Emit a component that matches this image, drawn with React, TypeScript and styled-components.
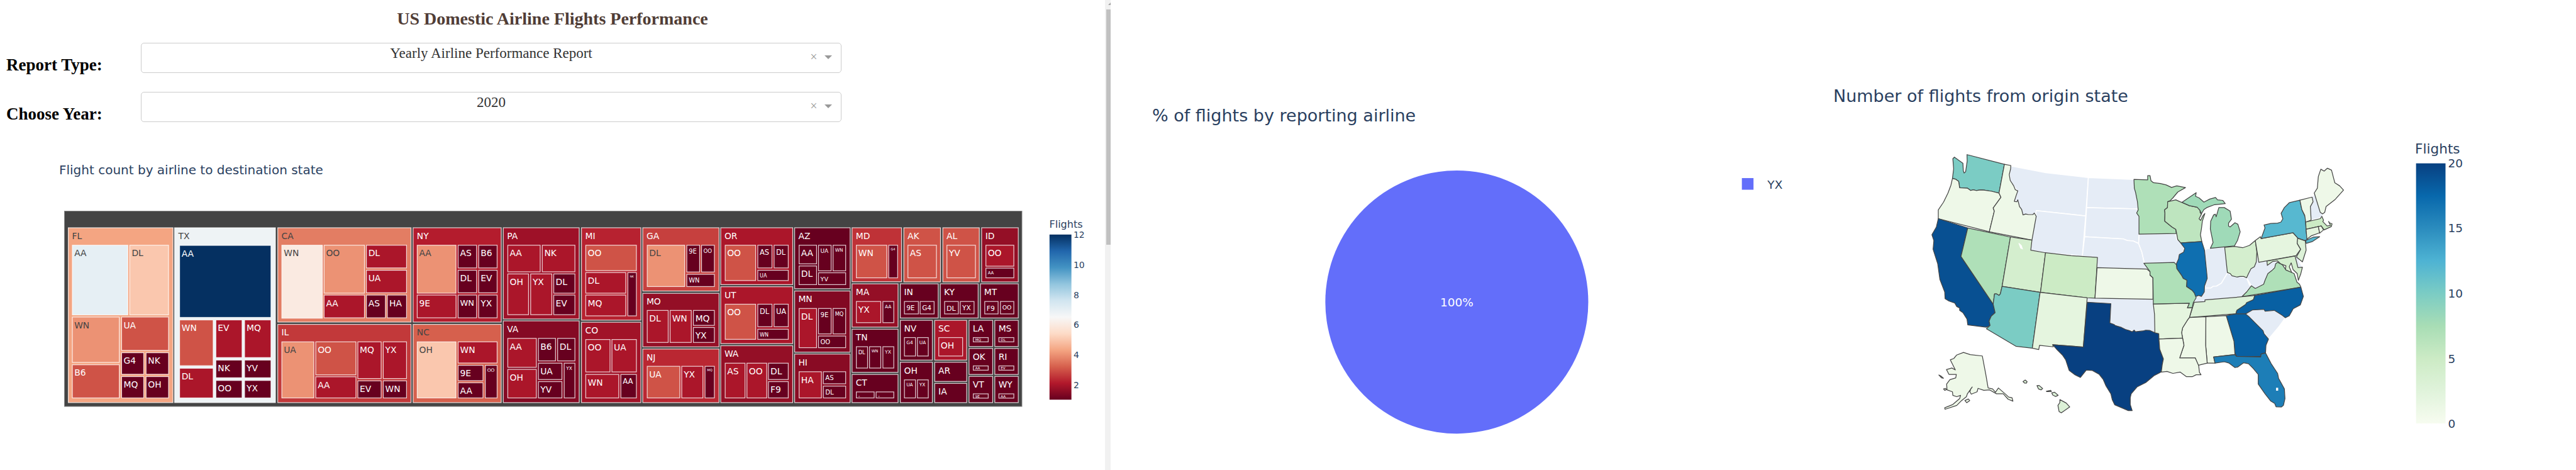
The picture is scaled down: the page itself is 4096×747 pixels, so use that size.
import React from "react";
import styled, { createGlobalStyle } from "styled-components";

const GlobalStyle = createGlobalStyle`
  * { box-sizing: border-box; }
  body { margin: 0; background: #fff; }
`;

const serif = `"Liberation Serif", "Times New Roman", serif`;
const sans = `"DejaVu Sans", Verdana, sans-serif`;

/* ---------- page ---------- */

const Page = styled.div`
  display: grid;
  grid-template-columns: minmax(0, 1757fr) 9px minmax(0, 1111fr) minmax(0, 1219fr);
  min-height: 100vh;
  overflow: hidden;
`;

const ReportPane = styled.main`
  padding-top: 14px;
`;

const PageTitle = styled.h1`
  margin: 0;
  font: bold 28px/32px ${serif};
  color: #503d36;
  text-align: center;
`;

const Filters = styled.form`
  display: flex;
  flex-direction: column;
  gap: 30px;
  padding: 22px 10px 0;
`;

const FilterRow = styled.div`
  display: grid;
  grid-template-columns: 214px minmax(0, 1114fr) minmax(0, 409fr);
  align-items: end;
`;

const FilterLabel = styled.label`
  font: bold 27px/26px ${serif};
  color: #000;
`;

const DropdownBox = styled.div`
  position: relative;
`;

const Dropdown = styled.select`
  display: block;
  width: 100%;
  height: 48px;
  padding: 0 0 15px;
  border: 1px solid #ccc;
  border-radius: 5px;
  background: #fff;
  color: #333;
  font: 23px ${serif};
  text-align: center;
  text-align-last: center;
  appearance: none;
`;

const ClearButton = styled.button`
  position: absolute;
  right: 36px;
  top: 12px;
  width: 16px;
  height: 20px;
  padding: 0;
  border: 0;
  background: none;
  color: #999;
  font: 20px/18px ${serif};
`;

const Caret = styled.svg`
  position: absolute;
  right: 15px;
  top: 20px;
  width: 12px;
  height: 6px;
  pointer-events: none;
`;

const ScrollTrack = styled.div`
  display: flex;
  flex-direction: column;
  background: #f1f1f1;
`;

const ScrollArrow = styled.svg`
  display: block;
  flex: none;
  width: 9px;
  height: 15px;
`;

const ScrollThumb = styled.div`
  height: 50%;
  margin-left: 2px;
  background: #c1c1c1;
`;

const ChartPanel = styled.section<{ $top: number }>`
  padding-top: ${(p) => p.$top}px;
`;

const ChartTitle = styled.h2<{ $size: number; $indent: number; $gap: number }>`
  margin: 0 0 ${(p) => p.$gap}px ${(p) => p.$indent}px;
  font: normal ${(p) => p.$size}px/${(p) => (p.$size > 20 ? 32 : 24)}px ${sans};
  color: #2a3f5f;
  white-space: nowrap;
`;

const Chart = styled.svg`
  display: block;
  width: 100%;
  font-family: ${sans};
`;

/* ---------- colour scales ---------- */

const RD_BU = ["67001f", "b2182b", "d6604d", "f4a582", "fddbc7", "f7f7f7", "d1e5f0", "92c5de", "4393c3", "2166ac", "053061"];
const GN_BU = ["f7fcf0", "e0f3db", "ccebc5", "a8ddb5", "7bccc4", "4eb3d3", "2b8cbe", "0868ac", "084081"];

function colourAt(scale: string[], t: number): string {
  const pos = Math.min(Math.max(t, 0), 1) * (scale.length - 1);
  const i = Math.min(Math.floor(pos), scale.length - 2);
  const part = (hex: string, k: number) => parseInt(hex.slice(k, k + 2), 16);
  const mix = [0, 2, 4].map((k) =>
    Math.round(part(scale[i], k) + (part(scale[i + 1], k) - part(scale[i], k)) * (pos - i))
  );
  return `rgb(${mix.join(",")})`;
}

function ScaleGradient({ id, scale }: { id: string; scale: string[] }) {
  return (
    <linearGradient id={id} x1="0" y1="1" x2="0" y2="0">
      {scale.map((c, i) => (
        <stop key={c} offset={i / (scale.length - 1)} stopColor={`#${c}`} />
      ))}
    </linearGradient>
  );
}

/* ---------- treemap: airline flights by destination state ---------- */

// label, flights, left, top, right, bottom, label size
type Leaf = [string, number, number, number, number, number, number?];
type State = { name: string; box: [number, number, number, number]; leaves: Leaf[] };
type Band = { x: number; states: State[] };

const BANDS: Band[] = [
  {
    x: 0,
    states: [
      { name: "FL", box: [50, 122, 594, 1027], leaves: [
        ["AA", 7, 71, 212, 361, 575], ["DL", 5, 367, 212, 571, 575], ["WN", 4, 71, 582, 317, 820],
        ["UA", 3, 325, 582, 571, 758], ["B6", 3, 71, 828, 317, 1003], ["G4", 1, 325, 766, 443, 881],
        ["NK", 1, 451, 766, 571, 881], ["MQ", 1, 325, 889, 443, 1003], ["OH", 1, 451, 889, 571, 1003]] },
      { name: "TX", box: [598, 122, 1122, 1027], leaves: [
        ["AA", 12, 624, 213, 1099, 588], ["WN", 3, 624, 597, 801, 837], ["EV", 2, 811, 597, 950, 795],
        ["MQ", 2, 959, 597, 1099, 795], ["DL", 2, 624, 846, 801, 1003], ["NK", 1, 811, 804, 950, 899],
        ["YV", 1, 959, 804, 1099, 899], ["OO", 1, 811, 909, 950, 1003], ["YX", 1, 959, 909, 1099, 1003]] },
    ],
  },
  {
    x: 1080,
    states: [
      { name: "CA", box: [50, 122, 741, 612], leaves: [
        ["WN", 6, 71, 212, 284, 592], ["OO", 4, 289, 212, 501, 463], ["DL", 2, 507, 212, 718, 333],
        ["UA", 2, 507, 341, 718, 461], ["AA", 2, 289, 469, 501, 590], ["AS", 1, 507, 469, 609, 590],
        ["HA", 1, 615, 469, 718, 590]] },
      { name: "IL", box: [50, 620, 741, 1027], leaves: [
        ["UA", 4, 71, 710, 240, 1003], ["OO", 3, 246, 710, 457, 884], ["AA", 2, 246, 890, 457, 1003],
        ["MQ", 2, 463, 710, 587, 903], ["YX", 2, 594, 710, 718, 903], ["EV", 1, 463, 911, 587, 1003],
        ["WN", 1, 594, 911, 718, 1003]] },
      { name: "NY", box: [748, 122, 1206, 612], leaves: [
        ["AA", 4, 769, 212, 973, 463], ["AS", 1, 980, 212, 1079, 333], ["B6", 1, 1086, 212, 1185, 333],
        ["DL", 1, 980, 341, 1079, 461], ["EV", 1, 1086, 341, 1185, 461], ["9E", 2, 769, 469, 973, 590],
        ["WN", 1, 980, 469, 1079, 590, 42], ["YX", 1, 1086, 469, 1185, 590]] },
      { name: "NC", box: [748, 620, 1206, 1027], leaves: [
        ["OH", 5, 769, 710, 973, 1003], ["WN", 2, 980, 710, 1185, 823], ["9E", 1, 980, 831, 1112, 914],
        ["AA", 1, 980, 921, 1112, 1003], ["OO", 1, 1120, 831, 1185, 1003, 24]] },
    ],
  },
  {
    x: 2280,
    states: [
      { name: "PA", box: [13, 122, 408, 596], leaves: [
        ["AA", 2, 36, 212, 207, 353], ["NK", 2, 214, 212, 386, 353], ["OH", 2, 36, 360, 147, 574],
        ["YX", 2, 154, 360, 267, 574], ["DL", 1, 273, 360, 386, 463], ["EV", 1, 273, 469, 386, 574]] },
      { name: "VA", box: [13, 602, 408, 1027], leaves: [
        ["AA", 2, 36, 692, 187, 845], ["OH", 2, 36, 852, 187, 1003], ["B6", 1, 194, 692, 286, 812],
        ["DL", 1, 293, 692, 386, 812], ["UA", 1, 194, 820, 319, 908], ["YV", 1, 194, 915, 319, 1003],
        ["YX", 1, 327, 820, 386, 1003, 24]] },
      { name: "MI", box: [416, 122, 726, 602], leaves: [
        ["OO", 3, 438, 212, 703, 347], ["DL", 2, 438, 353, 648, 463], ["MQ", 2, 438, 469, 648, 580],
        ["NK", 1, 655, 353, 703, 580, 15]] },
      { name: "CO", box: [416, 609, 726, 1027], leaves: [
        ["OO", 2, 438, 698, 567, 869], ["UA", 2, 573, 698, 703, 869], ["WN", 2, 438, 878, 612, 1003],
        ["AA", 1, 619, 878, 703, 1003, 38]] },
      { name: "GA", box: [732, 122, 1129, 452], leaves: [
        ["DL", 4, 755, 212, 952, 429], ["9E", 1, 959, 212, 1029, 354, 32], ["OO", 1, 1035, 212, 1105, 354, 28],
        ["WN", 1, 959, 362, 1105, 429, 32]] },
      { name: "MO", box: [732, 460, 1129, 740], leaves: [
        ["DL", 2, 755, 548, 867, 717], ["WN", 2, 873, 548, 986, 717], ["MQ", 1, 993, 548, 1105, 629],
        ["YX", 1, 993, 636, 1105, 717]] },
      { name: "NJ", box: [732, 747, 1129, 1027], leaves: [
        ["UA", 3, 755, 836, 927, 1003], ["YX", 2, 933, 836, 1046, 1003], ["MQ", 1, 1053, 836, 1105, 1003, 17]] },
    ],
  },
  {
    x: 3390,
    states: [
      { name: "OR", box: [24, 122, 399, 419], leaves: [
        ["OO", 3, 47, 212, 208, 398], ["AS", 1, 215, 212, 292, 333, 37], ["DL", 1, 299, 212, 376, 333, 37],
        ["UA", 1, 215, 341, 376, 398, 26]] },
      { name: "UT", box: [24, 426, 399, 723], leaves: [
        ["OO", 3, 47, 516, 208, 701], ["DL", 1, 215, 516, 292, 636, 37], ["UA", 1, 299, 516, 376, 636, 37],
        ["WN", 1, 215, 645, 376, 701, 26]] },
      { name: "WA", box: [24, 730, 399, 1027], leaves: [
        ["AS", 2, 47, 820, 153, 1003], ["OO", 2, 159, 820, 265, 1003], ["DL", 1, 270, 820, 376, 908],
        ["F9", 1, 270, 915, 376, 1003]] },
      { name: "AZ", box: [405, 122, 695, 440], leaves: [
        ["AA", 1, 428, 212, 522, 312], ["DL", 1, 428, 319, 522, 419], ["UA", 1, 528, 212, 597, 348, 29],
        ["WN", 1, 603, 212, 672, 348, 24], ["YV", 1, 528, 354, 672, 419, 31]] },
      { name: "MN", box: [405, 448, 695, 767], leaves: [
        ["DL", 2, 428, 538, 522, 744], ["9E", 1, 528, 538, 597, 673, 33], ["MQ", 1, 603, 538, 672, 673, 27],
        ["OO", 1, 528, 680, 672, 744, 32]] },
      { name: "HI", box: [405, 773, 695, 1027], leaves: [
        ["HA", 2, 428, 864, 547, 1003], ["AS", 1, 553, 864, 672, 930, 33], ["DL", 1, 553, 938, 672, 1003, 33]] },
      { name: "MD", box: [701, 122, 960, 404], leaves: [
        ["WN", 3, 723, 212, 884, 384], ["G4", 1, 890, 212, 940, 384, 17]] },
      { name: "MA", box: [701, 411, 942, 638], leaves: [
        ["YX", 2, 723, 502, 853, 615], ["AA", 1, 860, 502, 920, 615, 24]] },
      { name: "TN", box: [701, 645, 942, 871], leaves: [
        ["DL", 1, 723, 735, 785, 849, 27], ["WN", 1, 791, 735, 853, 849, 20], ["YX", 1, 860, 735, 920, 849, 25]] },
      { name: "CT", box: [701, 878, 942, 1027], leaves: [
        ["-", 1, 723, 968, 819, 1003, 24], ["-", 1, 825, 968, 920, 1003, 24]] },
    ],
  },
  {
    x: 4290,
    states: [
      { name: "AK", box: [68, 122, 261, 405], leaves: [["AS", 3, 89, 212, 240, 384]] },
      { name: "AL", box: [269, 122, 461, 405], leaves: [["YV", 3, 290, 212, 441, 384]] },
      { name: "ID", box: [469, 122, 662, 405], leaves: [["OO", 2, 491, 212, 639, 324], ["AA", 1, 491, 330, 639, 384, 22]] },
      { name: "IN", box: [50, 411, 249, 591], leaves: [["9E", 1, 71, 502, 147, 570, 34], ["G4", 1, 152, 502, 228, 570, 34]] },
      { name: "KY", box: [256, 411, 455, 591], leaves: [["DL", 1, 278, 502, 353, 570, 36], ["YX", 1, 359, 502, 434, 570, 34]] },
      { name: "MT", box: [463, 411, 662, 591], leaves: [["F9", 1, 485, 502, 558, 570, 35], ["OO", 1, 566, 502, 639, 570, 30]] },
      { name: "NV", box: [50, 599, 219, 808], leaves: [["G4", 1, 71, 688, 132, 787, 24], ["UA", 1, 138, 688, 198, 787, 24]] },
      { name: "SC", box: [227, 599, 396, 808], leaves: [["OH", 2, 248, 688, 375, 787]] },
      { name: "OH", box: [50, 815, 219, 1027], leaves: [["UA", 1, 71, 906, 132, 1003, 24], ["YX", 1, 138, 906, 198, 1003, 24]] },
      { name: "AR", box: [227, 815, 396, 918], leaves: [] },
      { name: "IA", box: [227, 924, 396, 1027], leaves: [] },
      { name: "LA", box: [404, 599, 530, 738], leaves: [["MQ", 1, 426, 688, 507, 714, 18]] },
      { name: "MS", box: [537, 599, 662, 738], leaves: [["DL", 1, 558, 688, 639, 714, 18]] },
      { name: "OK", box: [404, 744, 530, 882], leaves: [["AA", 1, 426, 834, 507, 860, 18]] },
      { name: "RI", box: [537, 744, 662, 882], leaves: [["EV", 1, 558, 834, 639, 860, 18]] },
      { name: "VT", box: [404, 888, 530, 1027], leaves: [["9E", 1, 426, 978, 507, 1004, 18]] },
      { name: "WY", box: [537, 888, 662, 1027], leaves: [["AA", 1, 558, 978, 639, 1004, 18]] },
    ],
  },
];

const flightColour = (v: number) => colourAt(RD_BU, (v - 1) / 11);
const labelColour = (v: number) => (v > 3.1 && v < 9 ? "#444" : "#fff");

// A state takes the mean of its airlines' flights, weighted by those flights.
function stateValue(leaves: Leaf[]): number {
  const total = leaves.reduce((sum, l) => sum + l[1], 0);
  return total ? leaves.reduce((sum, l) => sum + l[1] * l[1], 0) / total : 1;
}

function Tile({ box, value }: { box: number[]; value: number }) {
  const [x1, y1, x2, y2] = box;
  return (
    <rect
      x={x1 + 2}
      y={y1 + 2}
      width={x2 - x1 - 4}
      height={y2 - y1 - 4}
      fill={flightColour(value)}
      stroke="#fff"
      strokeOpacity={0.78}
      strokeWidth={4}
    />
  );
}

function StateTile({ state }: { state: State }) {
  const value = stateValue(state.leaves);
  return (
    <g>
      <Tile box={state.box} value={value} />
      <text x={state.box[0] + 21} y={state.box[1] + 60} fontSize={45} fill={labelColour(value)}>
        {state.name}
      </text>
      {state.leaves.map(([label, v, x1, y1, x2, y2, size = 45], i) => (
        <g key={i}>
          <Tile box={[x1, y1, x2, y2]} value={v} />
          <text x={x1 + 12} y={y1 + Math.min(10 + size * 1.1, y2 - y1 - 5)} fontSize={size} fill={labelColour(v)}>
            {label}
          </text>
        </g>
      ))}
    </g>
  );
}

function Treemap() {
  return (
    <Chart viewBox="-300 30 5697 1030" role="img" aria-label="Flight count by airline to destination state">
      <defs>
        <ScaleGradient id="rdbu" scale={RD_BU} />
      </defs>
      <rect x={32} y={38} width={4937} height={1007} fill="#444" stroke="#8a8a8a" strokeWidth={3} />
      {BANDS.map((band) => (
        <g key={band.x} transform={`translate(${band.x} 0)`}>
          {band.states.map((s) => (
            <StateTile key={s.name} state={s} />
          ))}
        </g>
      ))}
      <g fill="#2a3f5f">
        <text x={5110} y={124} fontSize={52}>Flights</text>
        <rect x={5111} y={159} width={113} height={851} fill="url(#rdbu)" />
        {[12, 10, 8, 6, 4, 2].map((n, i) => (
          <text key={n} x={5235} y={176 + i * 155} fontSize={45}>{n}</text>
        ))}
      </g>
    </Chart>
  );
}

/* ---------- pie: share of flights by airline ---------- */

function Pie() {
  return (
    <Chart viewBox="1909 280 1201 480" role="img" aria-label="YX 100%">
      <circle cx={2504} cy={519} r={226} fill="#636efa" />
      <text x={2504} y={526} fontSize={20} textAnchor="middle" fill="#fff">100%</text>
      <rect x={2994} y={306} width={20} height={20} fill="#636efa" />
      <text x={3038} y={324} fontSize={20} fill="#2a3f5f">YX</text>
    </Chart>
  );
}

/* ---------- choropleth: flights by origin state ---------- */

const NO_DATA: Record<string, string> = {
  MT: "469,135 650,170 869,195 855,393 600,366 600,395 592,378 583,386 560,384 532,388 515,345 505,314 488,316 496,290 503,264 484,238 466,210 463,180",
  WY: "600,366 855,393 838,600 648,583 572,570",
  ND: "869,195 1105,205 1112,250 1122,320 1125,357 860,350",
  SD: "860,350 1125,357 1118,378 1130,395 1131,487 1128,535 1100,522 1070,520 1050,512 850,500",
  NE: "850,500 1050,512 1070,520 1100,522 1128,535 1145,580 1155,625 1158,637 1185,667 914,660 916,607 838,600",
  IA: "1131,487 1320,484 1326,515 1350,532 1364,560 1360,580 1338,592 1334,615 1320,640 1312,635 1158,637 1145,580 1128,535",
  IN: "1468,570 1480,562 1498,560 1572,553 1588,685 1570,715 1555,740 1530,755 1500,765 1468,765 1480,715 1480,690 1475,640",
  KY: "1588,685 1610,702 1650,705 1685,712 1700,750 1710,753 1660,810 1470,828 1468,835 1415,838 1425,810 1452,808 1465,785 1470,765 1500,765 1512,756 1530,755 1555,740 1570,715",
  WV: "1738,580 1748,632 1790,626 1792,645 1825,628 1845,632 1835,650 1815,675 1795,690 1780,725 1773,745 1730,767 1710,753 1685,712 1695,690 1708,665 1735,630",
  NH: "2023,296 2035,278 2060,350 2077,383 2078,395 2060,405 2018,415 2013,345 2028,320",
  DE: "1935,600 1950,598 1958,630 1973,655 1950,660",
  SC: "1680,898 1715,878 1775,875 1780,884 1828,880 1885,918 1855,960 1798,1028 1765,980 1700,915",
  OK: "863,815 1202,823 1204,847 1210,900 1212,995 1185,983 1150,986 1105,988 1060,978 1010,957 980,945 985,845 863,838",
};

const ORIGINS: [string, number, string[]][] = [
  ["WA", 10, ["168,200 174,150 170,98 178,90 222,122 224,160 228,172 236,165 244,110 243,77 436,127 408,275 370,266 330,260 312,259 290,262 275,258 262,262 245,250 205,248 200,215 185,204"]],
  ["OR", 1, ["168,200 185,204 200,215 205,248 245,250 262,262 275,258 290,262 312,259 330,260 370,266 408,275 418,297 378,352 384,368 358,475 95,407 95,362 122,322 145,275 160,235"]],
  ["ID", 1, ["436,127 469,133 468,150 461,180 466,210 484,238 492,258 505,264 496,290 487,318 500,320 505,310 514,345 525,360 532,388 545,383 560,386 583,386 590,378 600,395 578,518 358,475 384,368 378,352 418,297 408,275"]],
  ["CA", 19, ["95,407 247,455 212,602 378,848 388,892 368,910 357,935 362,958 343,967 247,955 243,925 222,892 205,880 205,868 190,860 180,842 150,832 130,820 128,785 103,720 92,640 68,565 72,520 62,490 85,450"]],
  ["NV", 7, ["247,455 467,502 424,756 415,795 408,803 395,795 385,795 378,848 212,602"]],
  ["UT", 4, ["467,502 578,518 572,570 648,583 622,787 424,756"]],
  ["CO", 5, ["648,583 780,598 916,607 903,817 863,815 622,787"]],
  ["AZ", 10, ["424,756 620,787 580,1075 495,1065 343,975 362,958 357,935 368,910 388,892 378,848 385,795 395,795 408,803 415,795"]],
  ["NM", 2, ["620,787 863,815 843,1069 685,1057 688,1068 617,1060 613,1082 580,1075"]],
  ["KS", 1, ["914,660 1170,667 1187,680 1187,698 1202,712 1202,823 903,817"]],
  ["TX", 20, ["863,838 985,845 980,945 1000,952 1008,958 1040,968 1060,978 1080,984 1095,990 1105,982 1112,990 1150,986 1165,982 1185,983 1212,995 1232,1000 1237,1080 1256,1130 1250,1160 1252,1180 1240,1200 1210,1215 1165,1252 1120,1275 1090,1310 1085,1330 1085,1365 1095,1397 1075,1397 1005,1367 992,1340 985,1310 960,1270 945,1235 925,1210 890,1190 858,1188 828,1226 800,1212 770,1190 752,1135 735,1110 705,1080 685,1057 843,1069"]],
  ["MN", 7, ["1104,205 1175,207 1175,185 1187,185 1192,212 1205,222 1240,226 1270,233 1298,246 1325,238 1370,247 1330,270 1305,300 1290,315 1278,320 1277,350 1262,362 1264,378 1263,420 1300,450 1320,462 1322,484 1130,487 1130,395 1118,378 1126,362 1122,320 1112,270 1106,250"]],
  ["WI", 6, ["1278,320 1320,310 1342,320 1355,325 1390,340 1430,348 1445,360 1445,375 1452,384 1440,408 1448,416 1460,392 1470,380 1457,420 1452,460 1447,490 1454,525 1345,532 1330,515 1325,487 1320,462 1300,450 1263,420 1264,378 1262,362 1277,350"]],
  ["MI", 8, [
    "1352,323 1425,273 1422,292 1440,300 1465,322 1495,306 1525,298 1535,310 1562,313 1575,330 1520,335 1480,350 1465,360 1452,382 1445,365 1430,348 1390,340",
    "1498,560 1512,530 1498,460 1500,420 1515,388 1524,384 1528,398 1542,350 1570,350 1600,368 1607,410 1592,430 1592,445 1600,450 1625,428 1640,436 1652,475 1638,520 1622,548 1572,553",
  ]],
  ["IL", 17, ["1345,532 1454,525 1468,570 1475,640 1480,690 1482,715 1468,755 1467,785 1452,808 1438,803 1420,810 1415,790 1405,778 1375,757 1377,725 1358,715 1350,700 1325,665 1323,640 1334,615 1338,592 1360,580 1366,560"]],
  ["OH", 4, ["1572,555 1622,550 1665,557 1700,545 1730,520 1738,580 1735,630 1725,655 1708,665 1695,690 1685,712 1670,705 1650,705 1635,708 1610,702 1600,690 1586,685"]],
  ["PA", 2, ["1730,520 1756,500 1760,510 1925,480 1950,508 1946,535 1964,565 1940,598 1748,632"]],
  ["NY", 12, [
    "1760,510 1780,455 1775,440 1810,432 1845,430 1862,425 1872,408 1863,380 1880,350 1905,325 1960,312 1970,360 1988,400 1992,470 1998,515 1985,520 1950,508 1925,480",
    "1990,520 2030,502 2062,500 2025,525 1992,535",
  ]],
  ["VT", 1, ["1960,312 2023,296 2028,320 2014,345 2018,415 1990,425 1985,390 1970,360"]],
  ["ME", 1, ["2034,275 2050,250 2055,190 2068,152 2085,162 2102,147 2123,157 2140,222 2165,238 2185,260 2140,310 2095,345 2088,375 2077,383 2065,375"]],
  ["MA", 5, ["1990,425 2065,407 2073,395 2082,415 2078,422 2100,445 2118,442 2108,422 2112,428 2126,434 2122,448 2085,465 2070,445 1992,462"]],
  ["CT", 2, ["1992,462 2055,448 2062,480 2020,495 1996,513"]],
  ["RI", 1, ["2055,448 2070,445 2082,465 2062,482"]],
  ["NJ", 3, ["1948,508 1988,522 1992,570 1973,630 1942,605 1964,565 1946,535"]],
  ["MD", 4, ["1790,626 1935,600 1950,660 1973,657 1965,690 1952,725 1946,690 1925,670 1915,635 1905,655 1920,690 1885,672 1888,650 1860,640 1845,625 1820,628 1792,648"]],
  ["VA", 7, ["1845,632 1870,645 1888,672 1930,690 1945,735 1958,745 1965,760 1660,810 1685,785 1710,753 1730,767 1773,745 1780,725 1795,690 1815,675 1830,660 1835,640"]],
  ["TN", 3, ["1415,838 1470,835 1470,826 1660,810 1728,803 1720,825 1680,850 1635,880 1630,897 1390,917 1405,870"]],
  ["NC", 18, ["1728,803 1965,760 1978,808 1962,852 1925,872 1905,908 1885,918 1868,905 1828,880 1780,884 1775,875 1715,878 1680,898 1630,897 1635,880 1680,850 1685,840 1720,825"]],
  ["GA", 18, ["1580,907 1630,898 1680,898 1700,915 1730,945 1770,985 1775,1000 1798,1028 1785,1060 1783,1098 1760,1105 1758,1118 1633,1117 1625,1100 1620,1040"]],
  ["AL", 1, ["1475,913 1580,907 1620,1040 1625,1107 1515,1120 1523,1152 1482,1152 1474,1060"]],
  ["MS", 1, ["1390,917 1475,913 1474,1060 1482,1152 1435,1163 1420,1125 1340,1125 1362,1060 1350,995 1355,970 1380,930"]],
  ["AR", 2, ["1204,847 1390,843 1380,867 1405,865 1390,917 1380,930 1355,970 1350,995 1355,1023 1233,1028 1232,1000 1212,995 1210,900"]],
  ["LA", 1, ["1233,1028 1355,1023 1362,1060 1340,1125 1420,1125 1438,1165 1442,1200 1450,1212 1425,1212 1405,1222 1375,1222 1342,1198 1305,1205 1275,1195 1245,1198 1250,1160 1256,1130 1237,1080"]],
  ["MO", 7, ["1155,637 1312,633 1323,645 1325,665 1350,700 1358,715 1377,725 1375,757 1405,778 1415,790 1425,815 1410,840 1405,865 1380,867 1390,843 1204,847 1202,712 1187,698 1187,680"]],
  ["FL", 16, ["1515,1120 1625,1108 1633,1117 1758,1120 1760,1105 1783,1100 1812,1155 1845,1205 1850,1230 1880,1285 1883,1335 1875,1370 1865,1378 1837,1377 1830,1360 1810,1348 1780,1310 1745,1260 1745,1210 1720,1180 1695,1155 1670,1150 1640,1172 1625,1175 1595,1152 1570,1145 1522,1152"]],
  ["AK", 1, [
    "322,1115 340,1210 352,1280 375,1285 390,1302 405,1280 445,1315 458,1327 475,1330 480,1348 455,1338 430,1310 395,1310 360,1290 330,1292 300,1282 295,1300 265,1312 258,1300 262,1285 270,1275 245,1310 240,1325 215,1345 190,1370 130,1390 128,1382 170,1365 205,1335 210,1318 190,1325 170,1318 168,1300 140,1290 138,1260 155,1237 185,1228 188,1210 150,1210 137,1185 165,1177 183,1187 157,1135 175,1128 190,1110 225,1097 260,1108",
    "98,1213 108,1218 122,1230 112,1228",
    "122,1285 132,1282 138,1288 128,1292",
    "232,1345 250,1337 257,1345 242,1356",
  ]],
  ["HI", 3, [
    "532,1247 543,1239 553,1247 550,1255 540,1255",
    "604,1268 615,1267 633,1283 625,1290 612,1285",
    "652,1297 675,1292 678,1299 655,1299",
    "680,1305 695,1302 713,1318 700,1324 685,1316",
    "722,1340 755,1358 773,1378 730,1408 718,1402 712,1370 722,1355",
  ]],
];

function StateMap() {
  return (
    <Chart viewBox="-570 0 3954 1530" role="img" aria-label="Number of flights from origin state">
      <defs>
        <ScaleGradient id="gnbu" scale={GN_BU} />
      </defs>
      <g fill="#e5ecf6" stroke="#fff" strokeWidth={5} strokeLinejoin="round">
        {Object.entries(NO_DATA).map(([name, points]) => (
          <polygon key={name} points={points} />
        ))}
      </g>
      <g stroke="#444" strokeWidth={4} strokeLinejoin="round">
        {ORIGINS.map(([name, flights, shapes]) =>
          shapes.map((points, i) => (
            <polygon key={name + i} points={points} fill={colourAt(GN_BU, flights / 20)} />
          ))
        )}
      </g>
      <polygon points="508,532 514,534 525,545 532,566 518,560" fill="#fff" />
      <rect x={1837} y={1279} width={11} height={15} fill="#fff" />
      <g fill="#2a3f5f">
        <text x={2554} y={70} fontSize={70}>Flights</text>
        <rect x={2559} y={122} width={152} height={1341} fill="url(#gnbu)" />
        {[20, 15, 10, 5, 0].map((n, i) => (
          <text key={n} x={2724} y={142 + i * 336} fontSize={60}>{n}</text>
        ))}
      </g>
    </Chart>
  );
}

/* ---------- filters ---------- */

function Filter({ id, label, value }: { id: string; label: string; value: string }) {
  return (
    <FilterRow>
      <FilterLabel htmlFor={id}>{label}</FilterLabel>
      <DropdownBox>
        <Dropdown id={id} defaultValue={value}>
          <option value={value}>{value}</option>
        </Dropdown>
        <ClearButton type="button" aria-label={`Clear ${label}`}>×</ClearButton>
        <Caret viewBox="0 0 12 6" aria-hidden="true">
          <path d="M0 0H12L6 6Z" fill="#999" />
        </Caret>
      </DropdownBox>
    </FilterRow>
  );
}

export default function App() {
  return (
    <>
      <GlobalStyle />
      <Page>
        <ReportPane>
          <PageTitle>US Domestic Airline Flights Performance</PageTitle>
          <Filters>
            <Filter id="report-type" label="Report Type:" value="Yearly Airline Performance Report" />
            <Filter id="report-year" label="Choose Year:" value="2020" />
          </Filters>
          <ChartPanel $top={64}>
            <ChartTitle $size={20} $indent={94} $gap={51}>Flight count by airline to destination state</ChartTitle>
            <Treemap />
          </ChartPanel>
        </ReportPane>
        <ScrollTrack aria-hidden="true">
          <ScrollArrow viewBox="0 0 9 15">
            <path d="M5 8L9 4V8Z" fill="#a3a3a3" />
          </ScrollArrow>
          <ScrollThumb />
        </ScrollTrack>
        <ChartPanel $top={168}>
          <ChartTitle $size={27} $indent={66} $gap={59}>% of flights by reporting airline</ChartTitle>
          <Pie />
        </ChartPanel>
        <ChartPanel $top={137}>
          <ChartTitle $size={27} $indent={38} $gap={53}>Number of flights from origin state</ChartTitle>
          <StateMap />
        </ChartPanel>
      </Page>
    </>
  );
}
